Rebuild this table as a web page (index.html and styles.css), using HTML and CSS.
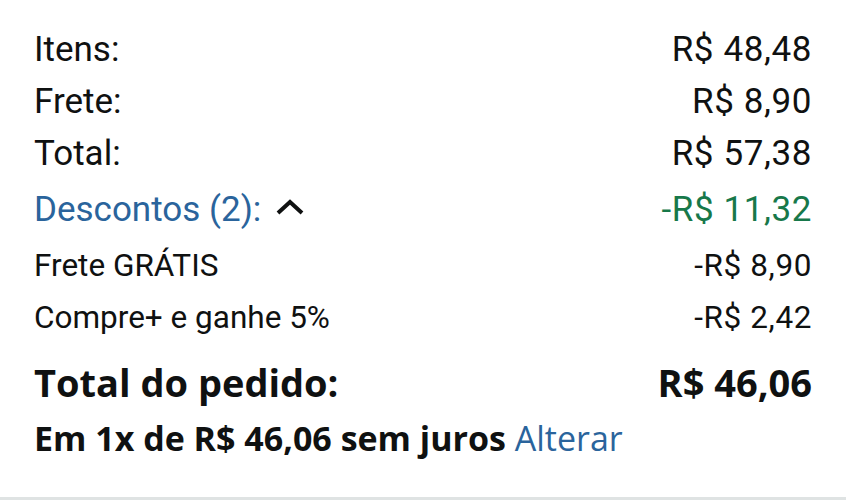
FILE: index.html
```html
<!DOCTYPE html>
<html>
<head>
  <link rel="stylesheet" href="styles.css">
</head>
<body>
  <div class="summary">
    <div class="row"><span>Itens:</span><span class="amount">R$ 48,48</span></div>
    <div class="row"><span>Frete:</span><span class="amount">R$ 8,90</span></div>
    <div class="row"><span>Total:</span><span class="amount">R$ 57,38</span></div>
    <div class="row discounts">
      <a href="#" class="toggle">Descontos (2):
        <svg class="chevron" width="28" height="16" viewBox="0 0 28 16"><path d="M2 14 L14 3 L26 14" fill="none" stroke="#0f1111" stroke-width="4"/></svg>
      </a>
      <span class="amount green">-R$ 11,32</span>
    </div>
    <div class="row small"><span>Frete GRÁTIS</span><span class="amount">-R$ 8,90</span></div>
    <div class="row small"><span>Compre+ e ganhe 5%</span><span class="amount">-R$ 2,42</span></div>
    <div class="row grand"><span>Total do pedido:</span><span>R$ 46,06</span></div>
    <div class="installments">Em 1x de R$ 46,06 sem juros <a href="#">Alterar</a></div>
  </div>
</body>
</html>
```

FILE: styles.css
```css
body { margin: 0; background: #fff; color: #0f1111; font-family: Roboto, "Noto Sans", sans-serif; }
.summary { padding: 24px 34px 0; height: 473px; border-bottom: 3px solid #dfe3e3; }
.row { display: flex; justify-content: space-between; align-items: baseline; font-size: 35px; line-height: 52px; }
.amount { letter-spacing: 0.6px; }
.discounts { line-height: 60px; }
.toggle { color: #2a649c; text-decoration: none; }
.chevron { vertical-align: 6px; margin-left: 6px; }
.green { color: #17784a; }
.row.small { font-size: 31.5px; line-height: 52px; }
.row.grand { font-family: "Open Sans", Roboto, sans-serif; font-size: 38px; font-weight: bold; line-height: 64px; margin-top: 6px; }
.installments { font-family: "Open Sans", Roboto, sans-serif; font-size: 34px; font-weight: bold; line-height: 48px; }
.installments a { color: #2a649c; text-decoration: none; font-weight: normal; }
```
